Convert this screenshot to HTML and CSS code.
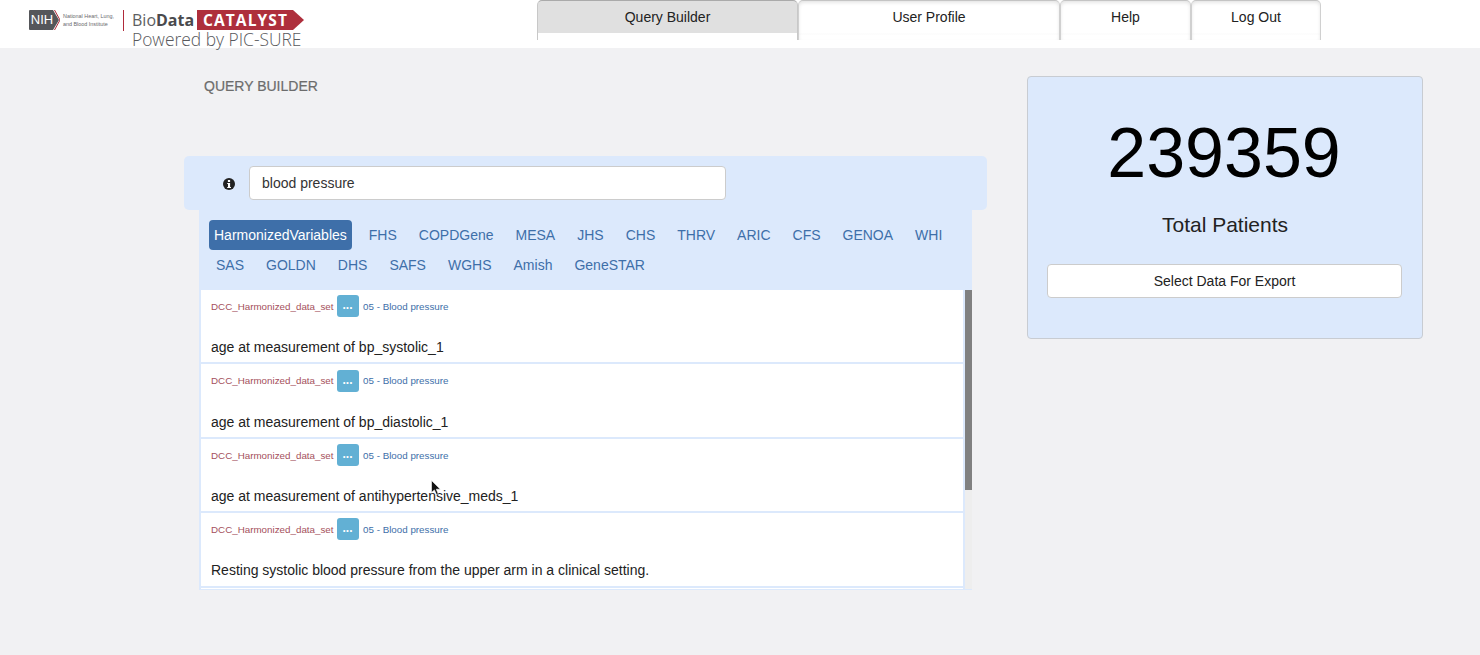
FILE: index.html
```html
<!DOCTYPE html>
<html lang="en">
<head>
<meta charset="utf-8">
<title>Query Builder</title>
<link rel="stylesheet" href="styles.css">
</head>
<body>
<header class="topbar">
  <div class="logo">
    <div class="nih">
      <svg class="nih-badge" width="31" height="20" viewBox="0 0 31 20" aria-hidden="true"><path d="M1 0H24L30 10L24 20H1Q0 20 0 19V1Q0 0 1 0Z" fill="#55565a"/><path d="M25.5 0L31 10L25.5 20" fill="none" stroke="#b02a3a" stroke-width="1"/></svg>
      <span class="nih-mark">NIH</span>
      <span class="nih-name">National Heart, Lung,<br>and Blood Institute</span>
    </div>
    <div class="logo-rule"></div>
    <div class="brand">
      <div class="brand-top">
        <span class="brand-bio">Bio<b>Data</b></span>
        <span class="brand-cat">CATALYST</span>
      </div>
      <div class="brand-sub">Powered by PIC-SURE</div>
    </div>
  </div>
  <nav class="tabs">
    <a class="tab tab-active tab-query">Query Builder</a>
    <a class="tab tab-profile">User Profile</a>
    <a class="tab tab-help">Help</a>
    <a class="tab tab-logout">Log Out</a>
  </nav>
</header>
<main class="content">
  <section class="left">
    <h1 class="title">QUERY BUILDER</h1>
    <div class="search">
      <svg class="info" width="12" height="12" viewBox="0 0 12 12" aria-hidden="true"><circle cx="6" cy="6" r="6" fill="#222"/><rect x="4.9" y="2" width="2.2" height="2" fill="#fff"/><path d="M4.2 5H7.1V8.9H8V10H4.2V8.9H5V6.1H4.2Z" fill="#fff"/></svg>
      <div class="search-input">blood pressure</div>
    </div>
    <div class="results">
      <div class="pills">
        <a class="pill pill-active">HarmonizedVariables</a>
        <a class="pill">FHS</a>
        <a class="pill">COPDGene</a>
        <a class="pill">MESA</a>
        <a class="pill">JHS</a>
        <a class="pill">CHS</a>
        <a class="pill">THRV</a>
        <a class="pill">ARIC</a>
        <a class="pill">CFS</a>
        <a class="pill">GENOA</a>
        <a class="pill">WHI</a>
        <a class="pill">SAS</a>
        <a class="pill">GOLDN</a>
        <a class="pill">DHS</a>
        <a class="pill">SAFS</a>
        <a class="pill">WGHS</a>
        <a class="pill">Amish</a>
        <a class="pill">GeneSTAR</a>
      </div>
      <div class="list-wrap">
        <div class="list">
          <article class="item">
            <div class="meta"><span class="study">DCC_Harmonized_data_set</span><span class="more">...</span><span class="group">05 - Blood pressure</span></div>
            <div class="desc">age at measurement of bp_systolic_1</div>
          </article>
          <article class="item">
            <div class="meta"><span class="study">DCC_Harmonized_data_set</span><span class="more">...</span><span class="group">05 - Blood pressure</span></div>
            <div class="desc">age at measurement of bp_diastolic_1</div>
          </article>
          <article class="item">
            <div class="meta"><span class="study">DCC_Harmonized_data_set</span><span class="more">...</span><span class="group">05 - Blood pressure</span></div>
            <div class="desc">age at measurement of antihypertensive_meds_1</div>
          </article>
          <article class="item">
            <div class="meta"><span class="study">DCC_Harmonized_data_set</span><span class="more">...</span><span class="group">05 - Blood pressure</span></div>
            <div class="desc">Resting systolic blood pressure from the upper arm in a clinical setting.</div>
          </article>
        </div>
        <div class="scrollbar"><div class="thumb"></div></div>
      </div>
    </div>
  </section>
  <aside class="summary">
    <div class="count">239359</div>
    <div class="count-label">Total Patients</div>
    <button class="export">Select Data For Export</button>
  </aside>
</main>
<svg class="cursor" width="11" height="16" viewBox="0 0 11 16" aria-hidden="true"><path d="M0.5 0.5V12.5L3.4 9.9L5.4 14.5L7.2 13.7L5.3 9.2H9.3Z" fill="#111" stroke="#fff" stroke-width="0.6"/></svg>
</body>
</html>
```
FILE: styles.css
```css
* { box-sizing: border-box; }
html, body { margin: 0; padding: 0; }
body {
  width: 1480px;
  height: 655px;
  overflow: hidden;
  background: #f1f1f3;
  font-family: "Liberation Sans", Arial, sans-serif;
  font-size: 14px;
  color: #222;
  position: relative;
}
.topbar {
  height: 48px;
  background: #fff;
  display: flex;
}
.logo {
  width: 537px;
  padding-left: 29px;
  padding-top: 10px;
  display: flex;
  align-items: flex-start;
  font-family: "Open Sans", sans-serif;
}
.nih {
  width: 86px;
  height: 20px;
  display: flex;
  align-items: center;
  position: relative;
}
.nih-badge { position: absolute; left: 0; top: 0; }
.nih-mark {
  position: relative;
  width: 24px;
  margin-left: 1px;
  text-align: center;
  color: #fff;
  font: 400 13px/20px "Liberation Sans", sans-serif;
}
.nih-name {
  margin-left: 9px;
  font: 5.4px/8px "Liberation Sans", sans-serif;
  color: #6a6a6e;
  white-space: nowrap;
  position: relative;
}
.logo-rule { width: 1px; height: 21px; margin-left: 8px; background: #b02a3a; }
.brand { margin-left: 8px; width: 173px; }
.brand-top { display: flex; align-items: center; height: 20px; }
.brand-bio {
  width: 65px;
  font-size: 16px;
  line-height: 20px;
  color: #5d5e62;
  white-space: nowrap;
}
.brand-bio b { font-weight: 700; color: #4a4a4d; }
.brand-cat {
  width: 107px;
  height: 20px;
  padding-left: 6px;
  background: #ae2f3c;
  clip-path: polygon(0 0, 96px 0, 107px 10px, 96px 20px, 0 20px);
  color: #fff;
  font: 700 15.5px/20px "Open Sans", sans-serif;
  letter-spacing: 1.1px;
  white-space: nowrap;
}
.brand-sub {
  font-size: 17.4px;
  font-weight: 300;
  line-height: 18px;
  color: #58595d;
  white-space: nowrap;
}
.tabs { display: flex; align-items: flex-start; }
.tab {
  height: 40px;
  padding-top: 8px;
  background: linear-gradient(#fff 0, #fff 32px, #fafafa 33px, #fff 34px);
  border: 1px solid #d0d0d0;
  border-top-color: #c4c4c4;
  border-bottom: 0;
  border-radius: 5px 5px 0 0;
  box-shadow: inset 0 2px 4px -1px #dcdcdc;
  text-align: center;
  font-size: 14px;
  line-height: 16px;
  color: #222;
}
.tab-query { width: 261px; }
.tab-profile { width: 262px; }
.tab-help { width: 131px; }
.tab-logout { width: 130px; }
.tab-active {
  background: linear-gradient(#e0e0e0 0, #e0e0e0 32px, #fff 32px);
  border-color: #aaa #c8c8c8 #c8c8c8;
  box-shadow: none;
}
.content { display: flex; align-items: flex-start; }
.left { width: 803px; margin-left: 184px; }
.title {
  margin: 30px 0 0 20px;
  height: 78px;
  font-size: 14px;
  font-weight: 400;
  line-height: 16px;
  color: #6c6c6c;
  -webkit-text-stroke: 0.2px #6c6c6c;
}
.search {
  height: 54px;
  background: #dce9fc;
  border-radius: 5px;
  display: flex;
  align-items: center;
  padding-left: 39px;
  padding-bottom: 1px;
}
.info { flex: none; margin-top: 2px; }
.search-input {
  margin-left: 14px;
  width: 477px;
  height: 34px;
  padding-left: 12px;
  background: #fff;
  border: 1px solid #ccc;
  border-radius: 4px;
  line-height: 32px;
  color: #333;
}
.results {
  margin-left: 15px;
  width: 773px;
  height: 380px;
  display: flex;
  flex-direction: column;
  background: #dce9fc;
}
.pills {
  height: 80px;
  padding: 10px 10px 0;
  display: flex;
  flex-wrap: wrap;
  align-content: flex-start;
  column-gap: 8px;
}
.pill {
  height: 30px;
  padding: 0 7px;
  border-radius: 4px;
  line-height: 30px;
  color: #3e6fa9;
}
.pill-active {
  padding: 0 5px;
  margin-right: 2px;
  background: #3e6fa9;
  color: #fff;
}
.list-wrap {
  height: 299px;
  display: flex;
}
.list {
  width: 766px;
  border: 2px solid #dce9fc;
  border-width: 0 2px;
  background: #fff;
  overflow: hidden;
}
.item {
  height: 74.4px;
  padding: 5.25px 10px 0;
  background: #fff;
  border-bottom: 2px solid #dce9fc;
}
.meta {
  height: 22px;
  display: flex;
  align-items: center;
  font-size: 9.8px;
}
.study { color: #a5505c; }
.more {
  width: 22px;
  height: 22px;
  margin: 0 4.5px 0 3px;
  background: #62b0d4;
  border-radius: 3px;
  color: #fff;
  text-align: center;
  font-size: 12px;
  font-weight: 700;
  line-height: 21px;
}
.group { color: #3e6fa9; }
.desc {
  margin-top: 22px;
  line-height: 16px;
  color: #222;
}
.scrollbar { width: 7px; height: 299px; background: #eeeeee; }
.thumb { height: 200px; background: #808080; }
.summary {
  margin: 28px 0 0 40px;
  width: 396px;
  height: 263px;
  padding: 0 19px;
  background: #dce9fc;
  border: 1px solid #c8ccd2;
  border-radius: 4px;
  text-align: center;
}
.count {
  margin-top: 36px;
  padding-right: 2px;
  font-size: 70px;
  line-height: 80px;
  color: #000;
}
.count-label {
  margin-top: 20px;
  font-size: 21px;
  line-height: 24px;
  color: #222;
}
.export {
  display: block;
  margin-top: 27px;
  width: 355px;
  height: 34px;
  background: #fff;
  border: 1px solid #ccc;
  border-radius: 4px;
  font: 14px "Liberation Sans", sans-serif;
  color: #222;
}
.cursor { position: absolute; left: 431px; top: 480px; }
```
